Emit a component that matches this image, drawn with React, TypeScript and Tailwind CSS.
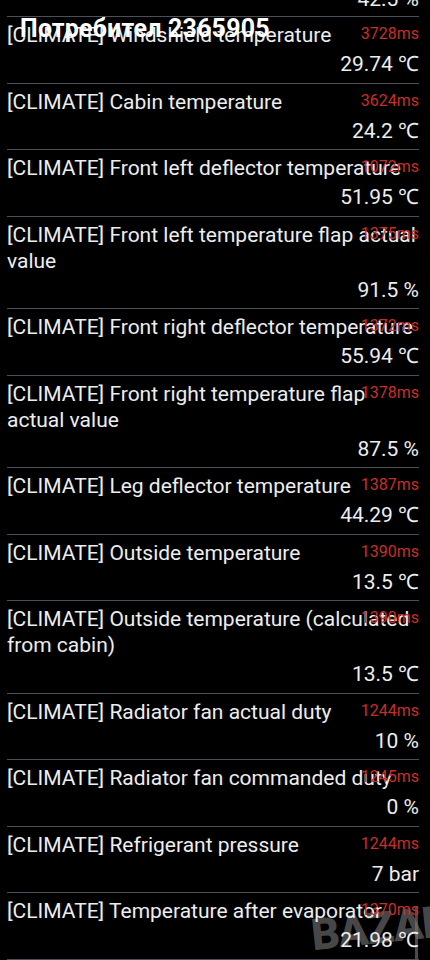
type Item = {
  title: string;
  ms: string;
  value: string;
};

const items: Item[] = [
  { title: "[CLIMATE] Windshield temperature", ms: "3728ms", value: "29.74 ℃" },
  { title: "[CLIMATE] Cabin temperature", ms: "3624ms", value: "24.2 ℃" },
  { title: "[CLIMATE] Front left deflector temperature", ms: "1072ms", value: "51.95 ℃" },
  { title: "[CLIMATE] Front left temperature flap actual value", ms: "1375ms", value: "91.5 %" },
  { title: "[CLIMATE] Front right deflector temperature", ms: "1372ms", value: "55.94 ℃" },
  { title: "[CLIMATE] Front right temperature flap actual value", ms: "1378ms", value: "87.5 %" },
  { title: "[CLIMATE] Leg deflector temperature", ms: "1387ms", value: "44.29 ℃" },
  { title: "[CLIMATE] Outside temperature", ms: "1390ms", value: "13.5 ℃" },
  { title: "[CLIMATE] Outside temperature (calculated from cabin)", ms: "1390ms", value: "13.5 ℃" },
  { title: "[CLIMATE] Radiator fan actual duty", ms: "1244ms", value: "10 %" },
  { title: "[CLIMATE] Radiator fan commanded duty", ms: "1245ms", value: "0 %" },
  { title: "[CLIMATE] Refrigerant pressure", ms: "1244ms", value: "7 bar" },
  { title: "[CLIMATE] Temperature after evaporator", ms: "1370ms", value: "21.98 ℃" },
];

function Row({ item }: { item: Item }) {
  return (
    <div className="relative flex flex-col gap-[3px] border-b border-[#4b5058] pt-[5px] pb-[5.5px] text-[21px] leading-[26px] text-[#ededed]">
      <div className="-mr-[6px]">{item.title}</div>
      <div className="text-right">{item.value}</div>
      {/* timing badge sits over the title */}
      <div className="absolute right-0 top-[9px] text-[16px] leading-[16px] text-[#c62f2b]">
        {item.ms}
      </div>
    </div>
  );
}

export default function App() {
  return (
    <div
      className="relative h-[960px] w-[430px] overflow-hidden bg-black"
      style={{ fontFamily: "Roboto, 'Noto Sans', sans-serif" }}
    >
      {/* site watermark, under the list */}
      <div className="absolute right-[-20px] bottom-[10px] flex -rotate-6 items-end text-[44px] font-black leading-none tracking-tight text-[#555]/85">
        BAZAR
      </div>
      <div className="absolute right-[12px] bottom-0 h-[54px] w-[3px] bg-[#7a7a7a]/60" />

      <div className="flex flex-col pl-[7px] pr-[11px]">
        <div className="flex h-[17px] flex-col justify-end overflow-hidden border-b border-[#4b5058]">
          <div className="pb-[4px] text-right text-[21px] leading-[26px] text-[#ededed]">42.5 %</div>
        </div>
        {items.map((item, i) => (
          <Row key={i} item={item} />
        ))}
      </div>

      <div className="absolute left-[20px] top-[16px] text-[25px] font-bold leading-none tracking-[0.2px] text-white">
        Потребител 2365905
      </div>
    </div>
  );
}
